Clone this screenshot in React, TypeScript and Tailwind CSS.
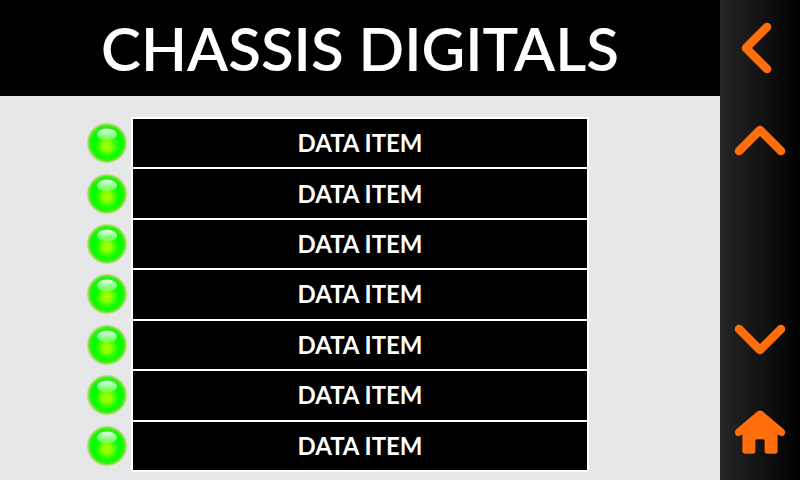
import * as React from "react";

const ITEMS = Array.from({ length: 7 }, (_, i) => ({ id: i, label: "DATA ITEM" }));

export default function App() {
  return (
    <div className="flex min-h-screen bg-[#e6e7e9]">
      <main className="flex min-w-0 flex-1 flex-col">
        <header className="flex h-24 items-center justify-center bg-black">
          <h1 className="whitespace-nowrap font-['Lato',sans-serif] text-[60px] leading-[96px] font-semibold text-white">
            CHASSIS DIGITALS
          </h1>
        </header>
        {/* bottom padding leaves room for the last row's border */}
        <ul className="grid flex-1 grid-rows-7 pt-[21px] pb-[10px]">
          {ITEMS.map((item) => (
            <DigitalRow key={item.id} label={item.label} />
          ))}
        </ul>
      </main>

      <nav className="grid w-20 shrink-0 grid-rows-5 bg-linear-to-r/srgb from-[#262626] to-black">
        <NavButton label="Back">
          <path d="M47 27 26 48l21 21" {...STROKE} />
        </NavButton>
        <NavButton label="Page up">
          <path d="M19 55 40 34l21 21" {...STROKE} />
        </NavButton>
        <span />
        <NavButton label="Page down">
          <path d="M19 41 40 62l21-21" {...STROKE} />
        </NavButton>
        <NavButton label="Home">
          <path
            fill="#ff6d0d"
            d="M37.2 27.6Q40 25.6 42.8 27.6L64 45.6Q65.4 47 65 49.2Q64 52.4 61 52.1L57.6 50.4V67Q57.6 69.8 54.8 69.8H47.4Q44.6 69.8 44.6 67V56.8Q44.6 55.2 43 55.2H37Q35.4 55.2 35.4 56.8V67Q35.4 69.8 32.6 69.8H25.2Q22.4 69.8 22.4 67V50.4L19 52.1Q16 52.4 15 49.2Q14.6 47 16 45.6Z"
          />
        </NavButton>
      </nav>
    </div>
  );
}

const STROKE = {
  fill: "none",
  stroke: "#ff6d0d",
  strokeWidth: 8.6,
  strokeLinecap: "round",
  strokeLinejoin: "round",
} as const;

function NavButton({ label, children }: { label: string; children: React.ReactNode }) {
  return (
    <button type="button" aria-label={label} className="flex items-center justify-center">
      <svg viewBox="0 0 80 96" className="h-24 w-20">
        {children}
      </svg>
    </button>
  );
}

function DigitalRow({ label }: { label: string }) {
  return (
    <li className="grid grid-cols-[131fr_458fr_131fr] items-center">
      <Lamp />
      {/* 2px taller than the row so neighbouring borders share one line */}
      <div className="flex h-[calc(100%+2px)] items-center justify-center self-start border-2 border-white bg-black font-['Lato',sans-serif] text-2xl font-bold text-white">
        {label}
      </div>
    </li>
  );
}

function Lamp() {
  const id = React.useId();
  return (
    <svg viewBox="0 0 42 42" className="mt-0.5 mr-[3px] size-[42px] justify-self-end" role="img" aria-label="On">
      <defs>
        <radialGradient id={`${id}-body`}>
          <stop offset="0" stopColor="#00ff00" />
          <stop offset="0.72" stopColor="#00ff00" />
          <stop offset="0.84" stopColor="#48ea0a" stopOpacity="0.95" />
          <stop offset="0.92" stopColor="#96d43a" stopOpacity="0.6" />
          <stop offset="1" stopColor="#d8e0a8" stopOpacity="0" />
        </radialGradient>
        <radialGradient id={`${id}-core`}>
          <stop offset="0" stopColor="#a0ff00" />
          <stop offset="0.3" stopColor="#90ff00" />
          <stop offset="1" stopColor="#00ff00" stopOpacity="0" />
        </radialGradient>
        <linearGradient id={`${id}-shine`} x1="0" y1="0" x2="0" y2="1">
          <stop offset="0" stopColor="#fff" stopOpacity="0.95" />
          <stop offset="1" stopColor="#fff" stopOpacity="0.2" />
        </linearGradient>
      </defs>
      <circle cx="21" cy="21" r="21" fill={`url(#${id}-body)`} />
      <circle cx="21" cy="24" r="15" fill={`url(#${id}-core)`} />
      <ellipse cx="21" cy="12.5" rx="10" ry="6" fill={`url(#${id}-shine)`} />
    </svg>
  );
}
